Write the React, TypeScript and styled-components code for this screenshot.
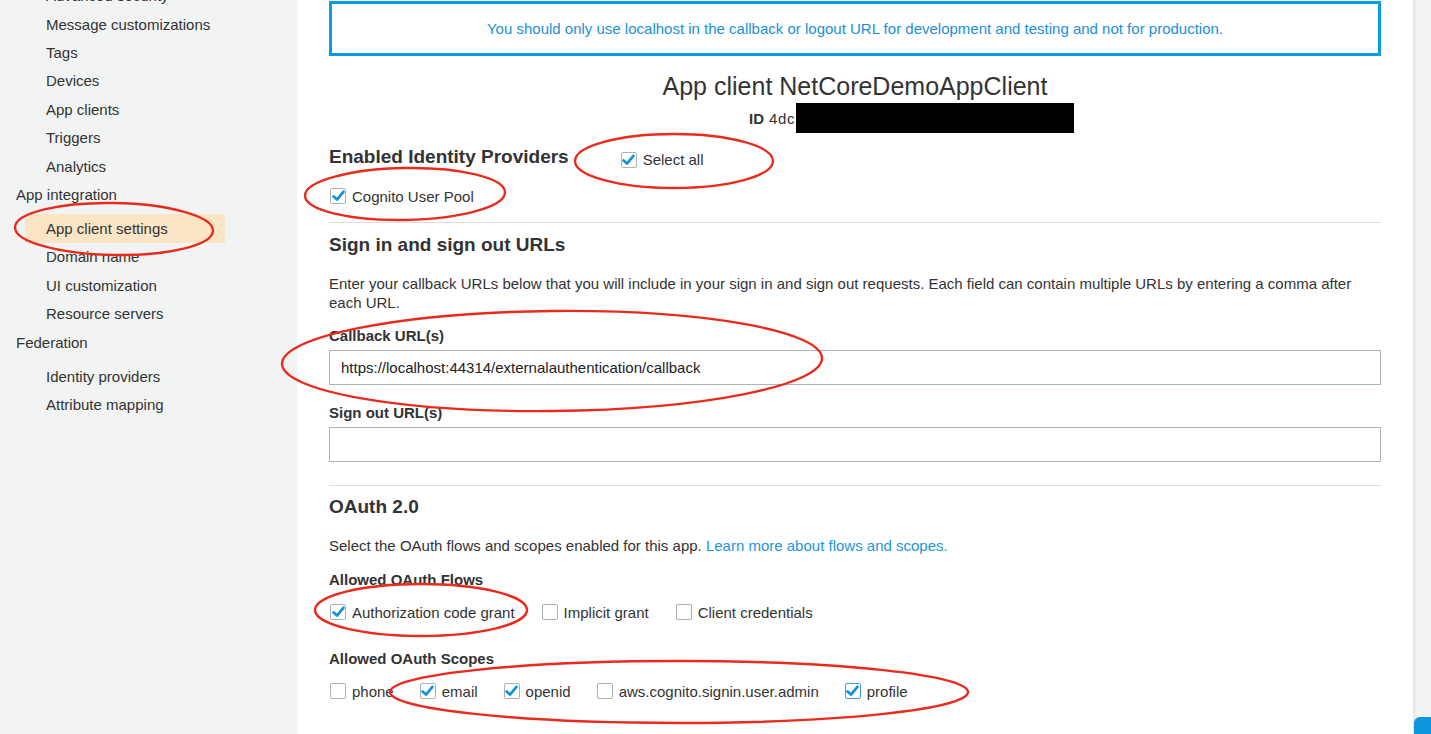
import React from "react";
import styled, { createGlobalStyle } from "styled-components";

const GlobalStyle = createGlobalStyle`
  html, body {
    margin: 0;
    padding: 0;
    height: 100%;
    overflow: hidden;
  }
  body {
    font-family: "Liberation Sans", Arial, Helvetica, sans-serif;
    color: #333;
    background: #fff;
  }
  * {
    box-sizing: border-box;
  }
`;

const Page = styled.div`
  position: relative;
  display: flex;
  width: 1431px;
  height: 734px;
  overflow: hidden;
`;

const Sidebar = styled.nav`
  width: 297px;
  flex-shrink: 0;
  background: #f2f3f3;
  overflow: hidden;
`;

const NavList = styled.div`
  display: flex;
  flex-direction: column;
  margin-top: -18.4px;
`;

const NavGroup = styled.div`
  height: 28.4px;
  display: flex;
  align-items: center;
  padding-left: 16px;
  margin-bottom: 5.6px;
  font-size: 15px;
  color: #333;
`;

const NavItem = styled.div<{ active?: boolean }>`
  height: 28.4px;
  width: 200px;
  margin-left: 25px;
  padding-left: 21px;
  display: flex;
  align-items: center;
  font-size: 15px;
  color: #333;
  background: ${(p) => (p.active ? "#fce5c4" : "transparent")};
  white-space: nowrap;
`;

const Main = styled.main`
  flex: 1;
  padding: 0 32px;
  display: flex;
  flex-direction: column;
`;

const Alert = styled.div`
  margin-top: 1px;
  height: 55px;
  border: 3px solid #0b9be0;
  display: flex;
  align-items: center;
  justify-content: center;
  font-size: 15px;
  color: #1b8fd8;
`;

const Title = styled.h1`
  margin: 15px 0 0;
  font-size: 25px;
  line-height: 30px;
  font-weight: 400;
  text-align: center;
  color: #333;
`;

const IdRow = styled.div`
  margin-top: 2px;
  height: 30px;
  padding-left: 420px;
  display: flex;
  align-items: center;
  font-size: 15px;
`;

const IdKey = styled.b`
  margin-right: 5px;
`;

const IdValue = styled.span`
  letter-spacing: 0.6px;
`;

const Redacted = styled.span`
  display: inline-block;
  width: 278px;
  height: 30px;
  margin-left: 1px;
  background: #000;
`;

const ProvidersRow = styled.div`
  margin-top: 10px;
  height: 28px;
  display: flex;
  align-items: center;
  gap: 51px;
`;

const SectionHeading = styled.h2<{ mt: number }>`
  margin: ${(p) => p.mt}px 0 0;
  font-size: 19px;
  line-height: 24px;
  font-weight: 700;
  color: #333;
`;

const Divider = styled.hr<{ mt: number }>`
  margin: ${(p) => p.mt}px 0 0;
  border: 0;
  border-top: 1px solid #dcdede;
  height: 0;
`;

const Paragraph = styled.p<{ mt: number; lh?: number }>`
  margin: ${(p) => p.mt}px 0 0;
  font-size: 15px;
  line-height: ${(p) => p.lh || 19}px;
  color: #333;
`;

const Link = styled.a`
  color: #1b96dd;
  text-decoration: none;
`;

const FieldLabel = styled.div<{ mt: number }>`
  margin-top: ${(p) => p.mt}px;
  font-size: 15px;
  line-height: 20px;
  font-weight: 700;
  color: #333;
`;

const TextInput = styled.div`
  margin-top: 4px;
  height: 35px;
  border: 1px solid #aab7b8;
  display: flex;
  align-items: center;
  padding-left: 11px;
  font-size: 15px;
  color: #222;
`;

const CheckRow = styled.div<{ mt: number; gap?: number }>`
  margin-top: ${(p) => p.mt}px;
  height: 20px;
  display: flex;
  align-items: center;
  gap: ${(p) => p.gap || 26}px;
`;

const CheckLabel = styled.label<{ shift?: number }>`
  display: inline-flex;
  align-items: center;
  gap: 6px;
  font-size: 15px;
  color: #333;
  margin-top: ${(p) => p.shift || 0}px;
  white-space: nowrap;
`;

const Box = styled.span<{ focused?: boolean }>`
  width: 16px;
  height: 16px;
  margin-left: 1px;
  border: 1px solid ${(p) => (p.focused ? "#3d9be0" : "#a9b3b5")};
  border-radius: 2px;
  background: #fff;
  display: inline-flex;
  align-items: center;
  justify-content: center;
`;

const RightPanel = styled.aside`
  width: 18px;
  flex-shrink: 0;
  background: #f2f3f3;
  border-left: 1px solid #e3e5e5;
  box-shadow: inset 2px 0 2px rgba(0, 0, 0, 0.04);
  display: flex;
  flex-direction: column;
`;

const FeedbackTab = styled.div`
  margin-top: auto;
  height: 17px;
  background: #0b96de;
  border-radius: 6px 0 0 0;
`;

const Annotations = styled.svg`
  position: absolute;
  left: 0;
  top: 0;
  pointer-events: none;
`;

function Checkbox({
  label,
  checked,
  focused,
  shift,
}: {
  label: string;
  checked?: boolean;
  focused?: boolean;
  shift?: number;
}) {
  return (
    <CheckLabel shift={shift}>
      <Box focused={focused}>
        {checked && (
          <svg width="13" height="12" viewBox="0 0 13 12">
            <path
              d="M1.6 6.4 L5 9.6 L11.4 1.8"
              fill="none"
              stroke="#1591dc"
              strokeWidth="2.7"
              strokeLinecap="round"
              strokeLinejoin="round"
            />
          </svg>
        )}
      </Box>
      {label}
    </CheckLabel>
  );
}

const navTop = [
  "Advanced security",
  "Message customizations",
  "Tags",
  "Devices",
  "App clients",
  "Triggers",
  "Analytics",
];

const navIntegration = ["Domain name", "UI customization", "Resource servers"];

const ellipses = [
  { cx: 114, cy: 229, rx: 99, ry: 26, rot: 1 },
  { cx: 674, cy: 161, rx: 99, ry: 27, rot: 0 },
  { cx: 405, cy: 194, rx: 100, ry: 26, rot: -1 },
  { cx: 552, cy: 361, rx: 270, ry: 50, rot: -0.6 },
  { cx: 421, cy: 610, rx: 106, ry: 26, rot: 0 },
  { cx: 679, cy: 692, rx: 289, ry: 31, rot: 0 },
];

export default function App() {
  return (
    <>
      <GlobalStyle />
      <Page>
        <Sidebar>
          <NavList>
            {navTop.map((n) => (
              <NavItem key={n}>{n}</NavItem>
            ))}
            <NavGroup>App integration</NavGroup>
            <NavItem active>App client settings</NavItem>
            {navIntegration.map((n) => (
              <NavItem key={n}>{n}</NavItem>
            ))}
            <NavGroup>Federation</NavGroup>
            <NavItem>Identity providers</NavItem>
            <NavItem>Attribute mapping</NavItem>
          </NavList>
        </Sidebar>

        <Main>
          <Alert>
            You should only use localhost in the callback or logout URL for
            development and testing and not for production.
          </Alert>
          <Title>App client NetCoreDemoAppClient</Title>
          <IdRow>
            <IdKey>ID</IdKey>
            <IdValue>4dc</IdValue>
            <Redacted />
          </IdRow>

          <ProvidersRow>
            <SectionHeading mt={0}>Enabled Identity Providers</SectionHeading>
            <Checkbox label="Select all" checked shift={5} />
          </ProvidersRow>
          <CheckRow mt={15}>
            <Checkbox label="Cognito User Pool" checked />
          </CheckRow>

          <Divider mt={16} />
          <SectionHeading mt={10}>Sign in and sign out URLs</SectionHeading>
          <Paragraph mt={16.5}>
            Enter your callback URLs below that you will include in your sign in
            and sign out requests. Each field can contain multiple URLs by
            entering a comma after each URL.
          </Paragraph>
          <FieldLabel mt={14.5}>Callback URL(s)</FieldLabel>
          <TextInput>https://localhost:44314/externalauthentication/callback</TextInput>
          <FieldLabel mt={18}>Sign out URL(s)</FieldLabel>
          <TextInput />

          <Divider mt={23} />
          <SectionHeading mt={9}>OAuth 2.0</SectionHeading>
          <Paragraph mt={17} lh={20}>
            Select the OAuth flows and scopes enabled for this app.{" "}
            <Link href="#">Learn more about flows and scopes.</Link>
          </Paragraph>
          <FieldLabel mt={14}>Allowed OAuth Flows</FieldLabel>
          <CheckRow mt={12}>
            <Checkbox label="Authorization code grant" checked />
            <Checkbox label="Implicit grant" />
            <Checkbox label="Client credentials" />
          </CheckRow>
          <FieldLabel mt={27}>Allowed OAuth Scopes</FieldLabel>
          <CheckRow mt={12} gap={25}>
            <Checkbox label="phone" />
            <Checkbox label="email" checked />
            <Checkbox label="openid" checked />
            <Checkbox label="aws.cognito.signin.user.admin" />
            <Checkbox label="profile" checked focused />
          </CheckRow>
        </Main>

        <RightPanel>
          <FeedbackTab />
        </RightPanel>

        <Annotations width="1431" height="734" viewBox="0 0 1431 734">
          {ellipses.map((e, i) => (
            <ellipse
              key={i}
              cx={e.cx}
              cy={e.cy}
              rx={e.rx}
              ry={e.ry}
              transform={`rotate(${e.rot} ${e.cx} ${e.cy})`}
              fill="none"
              stroke="#ea2a1c"
              strokeWidth="2.4"
            />
          ))}
        </Annotations>
      </Page>
    </>
  );
}
